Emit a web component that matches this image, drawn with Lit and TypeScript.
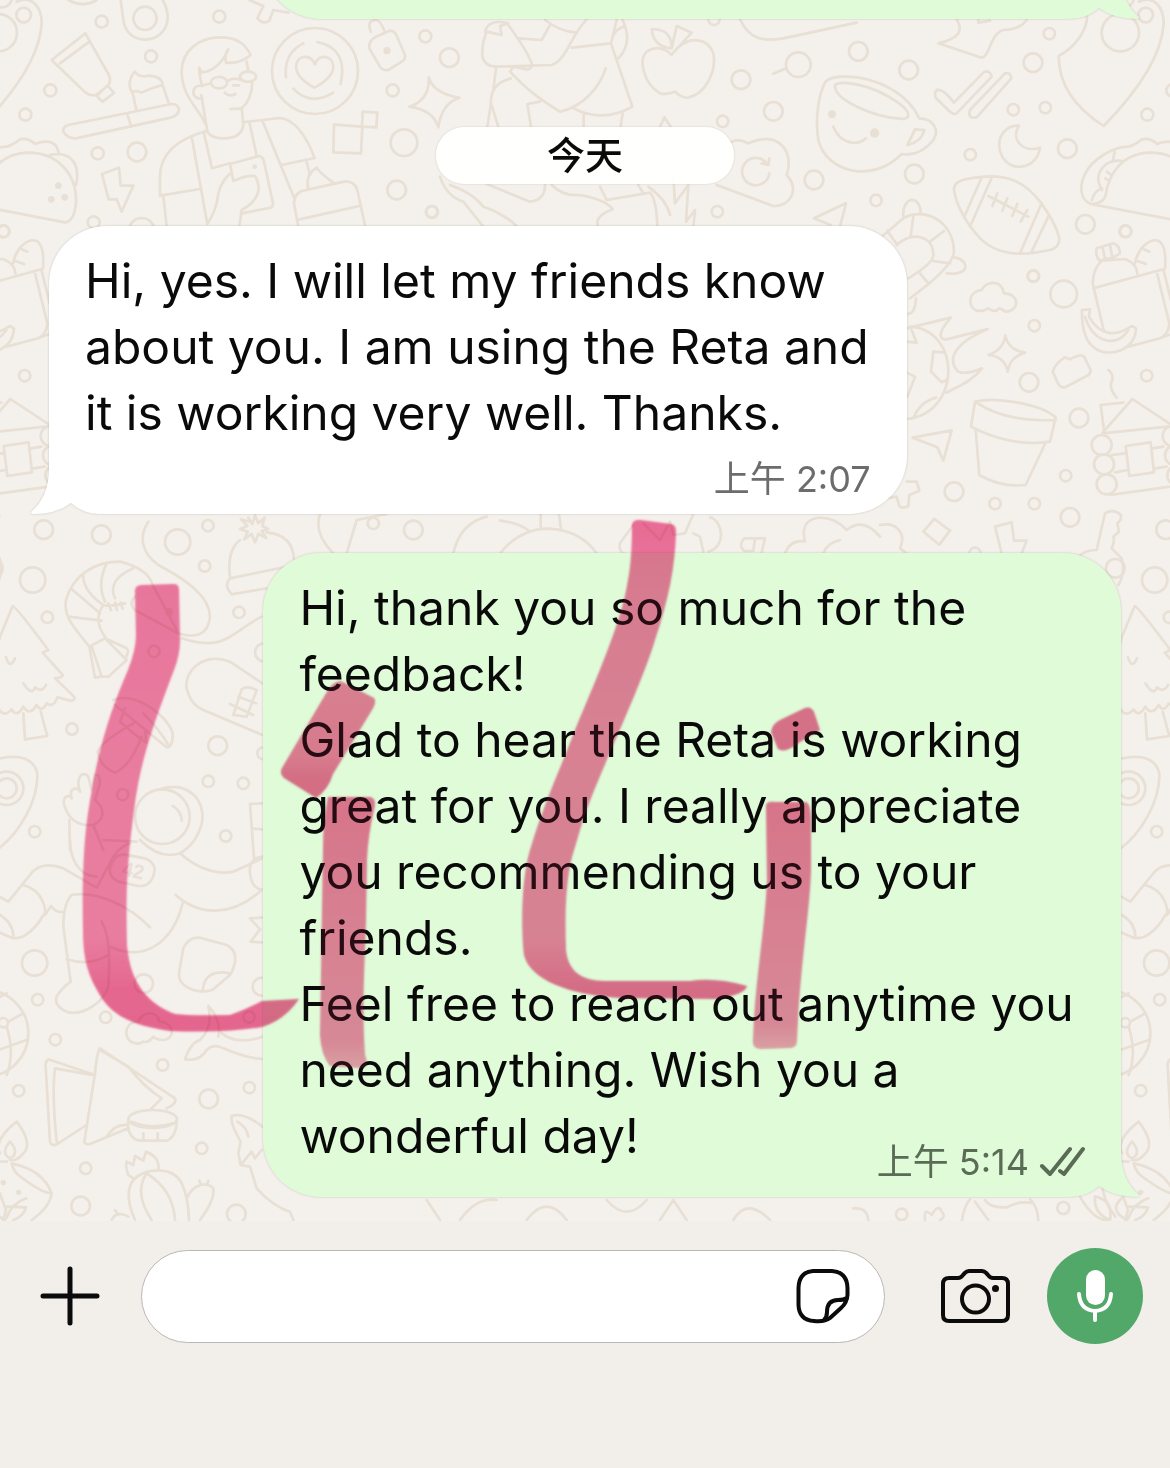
import { LitElement, html, css, svg } from "lit";
import { customElement, property } from "lit/decorators.js";

type Dot = [number, number, number];

interface Patch {
  at: string;
  rings: Dot[];
  dots?: Dot[];
  lines: string;
}

/* Doodles are drawn on a canvas three times larger than the wallpaper. */
const PATCHES: Patch[] = [
  {
    at: "translate(0 0) scale(.33333)",
    rings: [[71, 45, 22], [305, 65, 18], [453, 169, 18], [151, 271, 18], [76, 344, 18], [293, 460, 18], [411, 456, 28], [281, 667, 18], [425, 692, 38], [658, 50, 18], [1276, 109, 18], [1178, 271, 18], [1212, 428, 40], [1190, 570, 28], [1296, 636, 18], [-5, 98, 56], [435, 55, 35], [6, -8, 30], [945, 213, 129], [10, 694, 18]],
    dots: [[175, 557, 10], [154, 598, 10], [194, 592, 10], [1161, 152, 11], [764, 500, 7]],
    lines: `M362,0 L370,60 C375,100 405,119 435,119 C475,119 503,88 503,52 C503,30 495,10 485,-5 M205,0 Q250,25 290,0
    M50,5 C95,-15 125,20 125,70 C120,160 60,260 -55,378 C-130,330 -190,260 -190,168 C-140,140 -100,90 -105,35
    M155,180 L256,100 L325,222 Q335,240 325,256 L290,284 Q270,290 250,272Z M180,190 L268,125 M290,288 L322,256 L342,279 L308,305Z
    M205,375 L515,312 Q535,312 537,328 Q536,345 515,352 L228,415 Q205,417 190,395 Q188,380 205,375Z M382,343 L394,380 M409,330 L398,278 M488,255 L507,312
    M398,278 C385,265 385,235 405,215 Q415,232 440,228 Q485,225 488,255 Q450,265 425,278 Q405,268 398,278
    M615,370 C600,330 545,290 545,215 C545,150 600,112 660,112 C710,112 735,130 752,165 Q720,192 678,188 Q672,165 685,148 C670,185 640,215 605,217 L597,203 Q600,240 607,258 C590,255 580,262 580,280 Q585,298 607,295
    M604,285 L622,395 Q635,415 670,415 Q725,415 730,375 L725,325 L692,327 M725,325 Q755,300 757,245 M740,185 L745,213
    M633,250 a24,17 0 1 0 48,-4 a24,17 0 1 0 -48,4 M720,232 a24,15 0 1 0 48,-4 a24,15 0 1 0 -48,4 M682,244 Q700,230 722,240 M612,256 L633,250 M700,256 H717 M674,278 Q688,292 706,282
    M622,392 Q480,430 480,530 L480,587 L600,567 M575,410 L622,672 Q650,630 655,580 Q665,540 695,517 M612,400 L636,505 L690,490 M490,587 L500,680 M735,366 L840,354 Q900,360 944,474 L845,495 M748,366 L770,468 M788,364 L885,600
    M690,492 L778,468 Q788,470 792,485 L819,610 Q820,622 808,624 L725,640 M690,492 L700,543 Q740,525 765,528 C785,560 780,600 725,630 L718,680 M920,487 L930,525
    M945,193 C930,160 890,165 888,200 Q890,235 943,263 Q998,235 1000,200 C998,165 955,160 945,193Z M910,130 Q850,160 858,232 M952,126 Q1045,145 1022,252 M880,266 Q930,320 1000,278
    M895,680 L882,610 Q880,585 905,573 L1035,544 Q1065,545 1072,570 L1096,680 M898,658 L1078,618 M925,565 Q915,525 950,503 Q960,520 1000,548
    M1112,95 Q1100,62 1125,60 Q1140,58 1152,90 M1125,112 L1168,92 Q1182,92 1188,103 L1215,165 Q1217,178 1205,185 L1165,210 Q1148,212 1140,200 L1108,145 Q1106,122 1125,112Z
    M1002,374 L1087,380 L1083,460 L1000,457Z M1088,335 L1132,338 L1129,382 L1086,380Z M306,522 L357,503 L362,557 L400,557 L365,635 L350,598 L326,598Z
    M-94,612 L195,667 Q222,665 228,610 C232,520 170,458 85,458 C0,460 -40,520 -50,590 Q-60,612 -94,612 C-125,600 -130,560 -110,520 C-90,480 -30,440 20,440 Q40,435 60,418 Q85,412 105,432 Q150,415 170,440 L177,462 C220,465 240,500 228,555 M150,464 L177,462 M-22,455 L-27,480 M0,483 C-50,475 -90,520 -60,570 M-90,600 Q-85,575 -60,565 M-45,515 l10,8 M-50,535 l10,6
    M748,0 L790,18 L772,55 Q790,75 808,62 L820,30 L865,38 M1286,232 Q1290,300 1228,320 Q1300,330 1315,382 Q1325,310 1378,293 Q1300,280 1286,232Z`,
  },
  {
    at: "translate(430 0) scale(.33333)",
    rings: [[58, 173, 28], [933, 239, 28], [1105, 194, 37], [1030, 334, 28], [878, 364, 17], [862, 635, 17], [5, 635, 17], [852, 58, 17]],
    lines: `M1030,221 L1065,206 M725,165 Q690,130 650,155 C625,180 640,250 690,280 Q715,285 735,275 Q755,295 775,293 C830,280 860,210 850,160 C835,115 780,105 738,148 M725,145 Q670,140 665,88 Q725,85 725,145 L740,78 L785,98 L728,160
    M165,95 Q175,55 235,70 L210,78 L215,105 L170,95 Q155,130 157,170 Q165,200 200,200 L365,195 C410,180 420,110 470,58 M235,75 Q290,150 305,190 Q305,210 290,208 L250,200 L240,215 C300,280 350,310 390,335 C460,320 510,260 527,205
    M345,60 Q390,95 440,98 M265,115 L335,120 L360,75 M425,143 L543,130 L560,60 M543,130 L607,320 Q520,370 430,325 M578,60 Q610,130 565,175 M548,110 Q555,90 580,80 M243,235 Q180,250 183,310 L205,380 M198,205 L190,270 M183,310 L172,380 M330,305 L292,312 L303,380 M461,345 V380 M578,340 L572,380
    M30,530 Q50,590 100,605 L160,680 M60,555 Q130,580 160,620 Q220,640 262,680 M170,552 L300,605 Q345,600 345,555 M365,555 Q400,590 450,585 Q530,600 548,628 Q490,650 505,680 M510,560 L530,600 L660,578 Q680,600 682,680 M625,555 L640,580 M655,560 Q710,600 720,645 M690,380 L703,352 L722,380 M730,530 L735,610 L775,555 L768,665 L795,630 L790,680
    M860,555 L1030,618 C1080,620 1110,570 1070,525 C1095,450 1040,390 955,430 Q930,415 905,425 M1018,520 A41,41 0 1 1 1010,490 M1018,475 L1015,495 L995,490 M930,58 C960,120 1000,125 1060,115 L1280,68`,
  },
  {
    at: "translate(790 0) scale(.33333)",
    rings: [[205, 154, 28], [356, 210, 28], [778, 101, 17], [729, 188, 28], [670, 329, 17], [766, 323, 17], [541, 464, 17], [832, 446, 28], [373, 522, 28], [72, 540, 28], [258, 601, 17], [886, 673, 28], [1007, 694, 17], [730, 828, 17]],
    dots: [[126, 343, 12], [254, 399, 14]],
    lines: `M107,245 Q120,230 165,230 C270,230 360,290 387,355 C430,355 450,390 430,420 Q390,470 335,462 C250,550 110,520 85,420 C75,360 85,280 107,245Z M135,255 C150,240 240,250 320,305 C370,340 360,360 330,356 C250,350 130,300 135,255Z M130,380 C150,430 200,440 228,415 M375,388 L403,390 Q395,425 352,435 Q365,410 375,388Z
    M440,270 Q460,265 492,308 L583,215 Q600,210 605,230 L500,340 Q490,345 480,335 L438,295 Q432,280 440,270Z M540,330 L645,220 Q662,215 664,235 L562,350 Q540,360 538,340Z
    M687,377 C650,375 625,405 628,440 C635,520 740,520 750,443 C700,460 660,420 687,377Z M500,58 C520,90 510,115 445,130 L575,173 C600,170 600,100 640,90 Q690,88 710,60 M565,58 V68 L600,62
    M492,570 Q490,545 530,537 C620,520 690,525 750,605 C780,645 800,680 808,715 Q808,745 780,750 C690,770 620,765 570,715 C530,670 500,620 492,570Z M573,537 L522,652 M605,533 L540,680 M755,610 L690,760 M775,650 L725,755 M595,588 L715,650 M622,580 L607,618 M652,595 L637,632 M682,612 L667,648 M712,630 L692,665
    M72,655 L168,610 L150,680 M72,655 L122,675 M340,650 C335,590 390,580 392,640 M275,710 L340,655 C400,620 490,660 492,755 Q490,800 360,895 M320,735 C370,690 430,710 430,765 Q430,790 355,835 M370,650 L362,708 M462,693 L420,725 M430,783 L480,790 M390,820 L415,850 M292,692 L322,735 M495,773 C540,780 540,830 470,820`,
  },
  {
    at: "translate(880 220) scale(.33333)",
    rings: [[460, 169, 17], [551, 222, 40], [463, 317, 17], [447, 487, 28], [597, 594, 28], [800, 467, 17], [557, 767, 17], [222, 815, 28], [345, 851, 17], [463, 851, 17], [570, 892, 28], [285, 1000, 17], [665, 675, 30], [672, 733, 30], [680, 793, 30], [878, 648, 30], [885, 706, 30], [892, 766, 30]],
    lines: `M290,272 C265,265 260,215 305,210 C320,180 365,180 372,220 C420,220 420,275 375,275 Q365,265 357,265 Q345,280 325,265 Q310,275 290,272Z
    M80,325 L212,293 C180,330 170,360 200,358 L323,327 C200,380 210,430 235,455 Q260,465 306,445 C270,490 230,500 200,518 M90,320 C245,330 245,580 80,597 M190,397 L160,395 L153,455 L185,487 L200,480 M80,458 L105,470 L82,530 M100,595 Q120,545 168,533 M95,330 L110,368 L80,365 M108,235 Q105,285 80,282
    M376,347 Q385,390 435,398 Q390,410 383,455 Q375,410 325,405 Q370,390 376,347Z M518,455 Q525,430 555,412 L570,418 Q600,400 612,410 L632,450 Q630,465 620,468 L555,502 Q540,503 535,492Z
    M672,335 L638,190 Q640,145 665,122 L735,117 Q770,130 772,160 M640,205 L850,148 M830,155 L868,310 Q865,345 840,355 L745,380 M850,148 L885,290 M840,355 L880,340
    M650,85 L700,70 Q718,75 720,100 L700,112 L660,122 Q645,110 650,85Z M668,83 L675,118 M690,75 L697,112 M765,130 C775,80 810,55 835,62 Q860,75 855,145 M785,85 L808,95 M770,122 L798,132
    M606,270 L630,268 L627,290 C660,350 710,350 755,318 L768,325 C765,390 690,415 645,385 C615,365 605,320 606,270Z M615,290 C640,370 710,385 745,330 M685,450 Q705,465 693,490 Q690,510 710,533
    M662,555 L730,548 M662,555 L672,630 M668,638 L757,537 L880,618 L668,640 M695,705 L735,700 M705,757 L742,750 M690,825 L900,796 M820,685 L850,680 M828,745 L860,740 M737,678 L812,667 L822,757 L748,768Z
    M285,545 C340,530 480,550 527,592 L510,665 C420,680 330,650 273,620Z M285,545 C350,590 430,605 527,600 M287,630 L298,765 C340,790 390,800 437,795 L495,672 M98,653 L215,631 L190,722 L172,682Z
    M80,785 L110,785 L118,812 L88,825 L85,858 Q65,868 58,858 L50,830 L20,835 M130,935 L163,897 L210,932 L178,974Z M365,1000 L345,920 L395,907 L402,962 L440,962 L425,1000
    M600,1005 Q620,990 650,990 L675,880 Q700,865 723,885 Q725,900 712,910 L717,935 L700,950 Q705,965 695,985 L725,1015 C735,1050 725,1080 715,1095 M0,915 C50,905 80,940 60,985 L80,1000`,
  },
  {
    at: "translate(0 450) scale(.33333)",
    rings: [[131, 239, 28], [304, 254, 28], [98, 390, 38], [533, 276, 38], [624, 227, 17], [614, 348, 17], [142, 502, 17], [717, 487, 17], [462, 604, 17], [216, 837, 17], [653, 887, 28], [625, 994, 17], [730, 1000, 17], [368, 1034, 17], [677, 1158, 17], [104, 1145, 17], [792, 607, 27], [790, 910, 18], [20, 1015, 50], [20, 1015, 30], [487, 1100, 82], [-20, 355, 28]],
    dots: [[507, 485, 12]],
    lines: `M38,468 Q48,470 145,600 L128,608 L188,675 Q190,682 165,685 L222,740 Q228,752 210,752 L172,742 Q160,775 140,760 Q125,790 110,765 Q90,800 70,770 Q50,805 35,778 Q10,805 -5,775 L-20,790 Q-40,780 -50,740 L0,560Z M70,790 L75,868 L142,858 L122,785 M18,622 Q30,660 45,625 M70,700 Q95,740 105,712 Q125,730 138,705
    M-10,1200 C60,1150 115,1050 112,970 C100,920 50,915 0,925 M268,590 C220,530 190,500 198,450 C220,370 290,335 360,335 C420,350 450,375 458,405 M315,560 C280,510 300,480 310,465 Q330,470 375,460 M212,415 L300,490 M250,370 Q245,420 310,465 M320,340 Q290,400 315,455 M400,355 Q320,390 345,445 M205,500 L305,512 M325,460 l8,20 M345,458 l6,22 M362,458 l6,18
    M315,565 L268,590 L285,683 L300,680 M275,590 L305,680 L325,680 L380,630 L315,565 L380,595 Q390,605 375,625
    M445,215 C415,260 425,310 475,345 C560,390 630,440 630,500 C625,560 580,565 530,548 L405,480 Q385,460 405,440 M545,565 C680,610 700,540 785,500 M458,405 L535,550
    M690,380 Q680,300 720,270 M800,247 Q880,255 882,330 M690,385 L885,345 M690,385 Q670,405 695,433 L800,415 M745,203 L757,222 L765,196 L775,220 L794,203 L787,228 L805,237 L785,243 L799,264 L775,252 L765,277 L755,252 L733,268 L743,245 L720,237 L742,228 L723,208 L750,215
    M787,700 L690,635 C600,600 540,680 565,730 Q575,765 610,780 L787,855 M700,795 L725,718 Q740,705 770,720 L740,800Z M690,762 L760,795 M715,740 L768,760
    M340,750 C400,725 500,790 518,850 Q520,890 500,892 L345,765 M430,790 Q480,840 505,885 M375,775 L360,815 L400,850 L440,878 L435,845 M400,820 Q310,870 293,905 Q300,950 345,968 Q390,950 425,860
    M198,1080 C180,1040 205,1030 215,1045 C205,1010 235,1010 240,1025 C225,980 250,960 265,980 L275,1020 L285,975 Q300,970 300,1000 L285,1050 C320,1080 310,1110 280,1125 Q220,1130 198,1080Z M208,1110 L210,1200 M280,1125 L310,1200
    M480,1018 C560,990 620,1050 605,1120 Q590,1180 540,1210 M518,1068 Q545,1085 545,1112 M310,1170 L410,1175 M787,1060 L750,1062 L762,1225 M755,1135 L787,1138`,
  },
  {
    at: "translate(0 840) scale(.33333)",
    rings: [[104, 369, 38], [113, 479, 17], [317, 532, 17], [431, 431, 28], [166, 599, 17], [488, 675, 17], [56, 752, 17], [626, 777, 28], [748, 743, 17], [605, 925, 17], [257, 985, 17], [242, 1098, 28], [709, 1122, 28], [747, 531, 17], [785, 440, 27], [-45, 580, 130], [10, 548, 14]],
    dots: [[10, 1028, 8], [56, 1057, 8]],
    lines: `M-20,160 L25,185 L90,105 Q120,60 190,85 L290,143 L340,50 Q360,20 390,10 M70,135 C130,150 145,220 130,225 C100,280 60,300 35,293 L-20,270 M0,225 Q40,250 40,290 M135,225 L153,198 Q170,220 188,215 M210,0 C210,60 240,110 290,110
    M212,425 L190,260 Q190,190 215,165 C290,150 390,200 450,262 M305,245 C330,290 330,350 325,440 C310,490 250,525 205,517 Q160,500 170,470 Q180,450 212,425 M200,358 Q270,380 325,345 M330,320 C440,370 520,300 548,190 M527,165 C600,230 700,230 787,148 M420,0 Q480,60 540,40 Q620,110 700,95 L787,55 M787,50 Q745,55 750,100 Q755,145 787,150
    M370,43 L435,55 Q468,70 463,95 Q455,140 415,138 L355,125 Q325,110 330,85 Q340,45 370,43Z
    M600,293 L680,315 Q710,330 705,365 Q700,390 690,405 L640,448 Q615,460 580,450 Q535,435 537,400 L550,325 Q565,290 600,293Z M608,450 Q615,385 690,400 M787,233 L750,235 L780,268 L752,305 L787,307
    M25,545 L70,520 M20,560 Q45,640 20,705 M-20,635 L80,600 M-20,480 L20,460 M400,608 C370,600 370,545 415,545 C430,510 475,515 478,545 C520,545 530,595 490,600 Q470,600 460,590 Q445,610 430,605 Q415,615 400,608
    M625,498 Q665,540 655,590 M625,498 Q640,560 600,600 Q570,610 555,658 Q600,665 620,630 Q640,610 670,625 Q740,655 787,657 M655,570 Q700,620 787,590
    M300,625 L525,775 Q532,790 500,805 M300,625 Q290,640 285,700 L253,905 Q255,915 270,912 L385,865 M300,630 L385,680 Q430,740 485,775 L450,810 M285,705 L145,658 Q135,665 137,680 L150,905 Q155,920 170,913 L255,858 M275,705 L165,685 Q155,760 170,905 M320,890 Q345,850 385,855
    M385,837 a73,27 0 1 0 146,0 a73,27 0 1 0 -146,0 M385,840 Q380,895 420,902 L500,902 Q530,890 530,840 M395,845 Q455,870 520,850 M430,880 V900 M473,880 V900
    M30,960 Q50,965 70,940 Q100,910 50,845 Q-20,900 0,940 M30,905 Q60,940 30,955 Q0,940 30,905 M35,970 Q40,1000 75,1020 Q130,1060 155,1060 Q130,990 35,970 M155,1060 Q150,1100 95,1140 M20,965 Q-50,960 -60,1020 Q-60,1080 -20,1130 M0,1060 L18,1110 L10,1140 M20,1100 L78,1102 Q70,1130 40,1140
    M405,1140 Q370,1060 400,1020 C440,980 520,980 545,1030 Q565,1070 567,1140 M440,1000 Q400,1060 455,1140 M440,1000 Q520,1050 525,1140 M400,1015 L385,1005 Q375,980 380,965 L400,975 L405,948 L430,962 L438,935 Q480,950 475,990 M560,1075 C580,1030 620,1025 640,1045 Q645,1080 600,1140 M598,1022 L602,1032 M625,1022 L622,1032 M335,1140 Q350,1110 385,1130 M345,1110 L355,1125
    M787,860 Q730,815 695,828 Q690,850 722,905 L715,940 L722,975 L750,980 L770,1045 Q820,1100 870,1115 L880,1140 M722,975 L755,935 L765,955 L785,930 M712,845 Q740,860 745,890`,
  },
  {
    at: "translate(860 1120) scale(.33333)",
    rings: [[125, 283, 17], [610, 264, 18]],
    lines: `M305,310 Q310,260 330,238 M535,310 Q535,260 510,238 M375,240 Q390,265 440,262 Q480,240 520,250 M345,245 L385,300 M195,300 Q190,260 215,285 Q235,250 245,275 Q260,290 240,300 M705,230 Q700,280 750,300 Q760,240 705,230Z M865,235 Q820,250 805,295 M785,235 Q745,270 800,300 M660,230 Q700,300 740,300 M-20,265 Q20,260 25,300
    M-380,300 Q-340,230 -270,300 M-600,300 L-560,240 L-520,300 M-760,240 Q-700,310 -640,240 M-1000,300 Q-940,220 -880,300 M-1200,300 Q-1150,230 -1090,240 M-1300,240 L-1260,300`,
  },
  {
    at: "translate(500 500) scale(.33333)",
    rings: [[-260, 90, 28], [-380, 70, 17]],
    lines: `M0,62 Q60,68 90,95 M0,160 Q60,86 145,86 Q240,90 290,160 M122,42 V82 M177,42 L183,85 M400,75 L360,130 Q355,150 370,160 L440,180 M430,70 L480,120 L510,65 L520,105 L555,100 L580,42 M630,52 C670,64 680,140 625,155 M580,100 L600,110 L610,155 M733,115 h62 l-10,42 M765,115 l-5,38 M733,115 q-20,20 0,38 h25 M855,160 Q870,118 915,124 Q900,64 950,54 Q1000,48 1040,90 Q1090,50 1140,110 M970,160 Q980,130 1020,120
    M-540,42 Q-560,100 -500,160 M-140,160 Q-120,70 -40,50 M-460,160 L-430,60 L-340,42`,
  },
];

interface Mark {
  fill: string;
  d: string;
}

const MARKS: Mark[] = [
  { fill: "url(#hook)", d: "M135,591 Q135,585 142,585 L174,584 Q179,584 179,590 L180,640 Q180,655 174,670 C155,720 140,760 134,810 C126,870 126,900 127,945 C130,985 150,1005 175,1014 Q190,1016 230,1015 Q245,1010 262,1001 L299,999 Q285,1020 262,1027 Q225,1033 170,1031 C130,1025 110,1015 97,990 C85,970 83,950 83,930 C82,870 84,830 92,790 C100,740 115,700 128,670 Q136,650 136,635Z" },
  { fill: "url(#hook)", d: "M632,526 Q632,519 640,520 L671,524 Q676,525 676,531 C675,570 668,600 655,640 C640,690 600,770 583,820 L572,857 C565,885 565,920 566,950 C568,970 580,981 605,981 L690,981 Q715,977 747,986 Q745,995 715,999 L620,998 C570,995 530,980 524,955 C521,930 521,880 530,850 C545,800 560,770 575,730 C600,670 622,620 628,580 Q632,560 632,526Z" },
  { fill: "url(#bar)", d: "M766,806 Q766,801 775,802 L806,802 Q812,804 811,830 L811,860 C812,900 800,960 797,1040 Q797,1048 790,1048 L760,1049 Q752,1048 753,1040 C755,980 765,930 767,880Z" },
  { fill: "#f37fab", d: "M771,732 Q772,724 780,720 L805,708 Q811,706 814,712 L820,730 L800,742 Q785,754 778,749Z" },
  { fill: "url(#slash)", d: "M340,681 Q345,683 374,698 Q377,702 372,710 L333,774 Q328,790 316,798 L284,778 Q279,774 282,768 L328,690 Q333,682 340,681Z" },
  { fill: "url(#bar)", d: "M328,797 L370,797 Q377,798 374,810 Q368,835 367,860 L366,920 C364,980 362,1010 365,1055 Q370,1068 360,1068 L330,1066 Q321,1055 320,1035 L323,850 Q323,820 328,797Z" },
];

const tickIcon = html`<svg class="ticks" viewBox="0 0 46 32" role="img" aria-label="已读">
  <path d="M3 20 11 28 31 3M21 25 25 28 44 3" />
</svg>`;

@customElement("chat-wallpaper")
class ChatWallpaper extends LitElement {
  static styles = css`
    :host { display: block; }
    svg { display: block; width: 100%; height: 100%; }
    .ink { fill: none; stroke: #e8dfd5; stroke-width: 8; stroke-linecap: round; stroke-linejoin: round; }
    .dot { fill: #e8dfd5; stroke: none; }
    .badge { fill: #e8dfd5; stroke: none; font: bold 60px "Liberation Sans", sans-serif; }
  `;

  render() {
    return html`<svg aria-hidden="true">
      <defs>
        <g id="doodles" class="ink">
          ${PATCHES.map(
            (p) => svg`<g transform=${p.at}>
              ${p.rings.map(([x, y, r]) => svg`<circle cx=${x} cy=${y} r=${r}></circle>`)}
              ${(p.dots ?? []).map(([x, y, r]) => svg`<circle class="dot" cx=${x} cy=${y} r=${r}></circle>`)}
              <path d=${p.lines}></path>
            </g>`
          )}
          <text class="badge" transform="translate(121 875) rotate(12) scale(.33333)">42</text>
        </g>
      </defs>
      <use href="#doodles"></use>
      <use href="#doodles" x="1122"></use>
      <use href="#doodles" x="-1122"></use>
    </svg>`;
  }
}

@customElement("chat-bubble")
class ChatBubble extends LitElement {
  @property({ type: Boolean, reflect: true }) outgoing = false;
  @property() time = "";

  static styles = css`
    :host {
      --fill: #ffffff;
      --meta: #6c6c6c;
      position: relative;
      display: block;
      box-sizing: border-box;
      width: 858px;
      max-width: 80%;
      padding: 22px 36px 12px;
      border-radius: 58px;
      background: var(--fill);
      color: #0a0a0a;
      filter: drop-shadow(0 0 1px rgba(60, 50, 40, 0.22));
      align-self: flex-start;
    }
    :host([outgoing]) { --fill: #dffbd7; --meta: #5a6b56; align-self: flex-end; }
    .tail { position: absolute; z-index: -1; left: -18px; bottom: 0; width: 70px; height: 60px; fill: var(--fill); }
    :host([outgoing]) .tail { left: auto; right: -18px; transform: scaleX(-1); }
    .body { font-size: 48px; line-height: 66px; }
    .meta {
      display: flex;
      align-items: center;
      gap: 10px;
      width: fit-content;
      margin: 10px 0 0 auto;
      font-size: 36px;
      line-height: 46px;
      color: var(--meta);
    }
    :host([outgoing]) .meta { margin-top: -30px; }
    .ticks { width: 46px; height: 32px; fill: none; stroke: var(--meta); stroke-width: 4; stroke-linecap: round; stroke-linejoin: round; }
    ::slotted(p) { margin: 0; }
  `;

  render() {
    return html`
      <svg class="tail" viewBox="0 0 70 60" aria-hidden="true">
        <path d="M18,0 V14 Q18,43 0,58 Q0,60 3,60 Q25,60 40,49 Q52,60 70,60 V0Z"></path>
      </svg>
      <div class="body"><slot></slot></div>
      ${this.time
        ? html`<div class="meta"><time>${this.time}</time>${this.outgoing ? tickIcon : ""}</div>`
        : ""}
    `;
  }
}

@customElement("app-root")
class AppRoot extends LitElement {
  static styles = css`
    :host {
      display: flex;
      flex-direction: column;
      min-height: 100vh;
      background: #f2efea;
      font-family: Inter, "Noto Sans CJK SC", sans-serif;
    }
    .chat {
      position: relative;
      display: flex;
      flex-direction: column;
      overflow: hidden;
      padding: 0 49px 24px;
      background: #f4f0eb;
    }
    chat-wallpaper { position: absolute; inset: 0; }
    .earlier { height: 140px; margin-top: -121px; }
    .day {
      position: relative;
      align-self: center;
      box-sizing: border-box;
      min-width: 298px;
      margin: 108px 0 42px;
      border-radius: 28px;
      background: rgba(255, 255, 255, 0.94);
      box-shadow: 0 0 2px rgba(60, 50, 40, 0.2);
      color: #0a0a0a;
      font-size: 38px;
      font-weight: 500;
      line-height: 57px;
      text-align: center;
    }
    .reply { margin-top: 39px; }
    .marker { position: absolute; left: 0; top: 0; width: 1170px; height: 1221px; pointer-events: none; }
    .wash { fill: #e0507f; opacity: 0.14; }
    .multiply { mix-blend-mode: multiply; }
    .composer { display: flex; align-items: center; padding: 27px 27px 124px 40px; }
    button { display: grid; place-items: center; flex: none; margin: 0; padding: 0; border: 0; background: none; }
    button svg { display: block; fill: none; stroke: #0b0b0b; stroke-width: 5; stroke-linecap: round; stroke-linejoin: round; }
    .add, .add svg { width: 60px; height: 60px; }
    .field {
      display: flex;
      align-items: center;
      flex: 1;
      min-width: 0;
      box-sizing: border-box;
      height: 93px;
      margin: 0 56px 0 41px;
      padding: 0 34px 0 36px;
      border: 1px solid #b9b8b6;
      border-radius: 47px;
      background: #ffffff;
    }
    input { flex: 1; min-width: 0; border: 0; outline: 0; background: none; font: 48px Inter, "Noto Sans CJK SC", sans-serif; }
    .sticker svg { width: 54px; height: 56px; stroke-width: 4; }
    .camera { margin-right: 37px; }
    .camera svg { width: 69px; height: 54px; stroke-width: 4; }
    .mic { width: 96px; height: 96px; border-radius: 50%; background: #52a869; }
    .mic svg { width: 36px; height: 54px; stroke: #ffffff; stroke-width: 4; }
    .solid { fill: #0b0b0b; stroke: none; }
    .white { fill: #ffffff; stroke: none; }
  `;

  render() {
    return html`
      <main class="chat">
        <chat-wallpaper></chat-wallpaper>
        <chat-bubble class="earlier" outgoing></chat-bubble>
        <div class="day">今天</div>
        <chat-bubble time="上午 2:07">
          <p>Hi, yes. I will let my friends know about you. I am using the Reta and it is working very well. Thanks.</p>
        </chat-bubble>
        <chat-bubble class="reply" outgoing time="上午 5:14">
          <p>Hi, thank you so much for the feedback!</p>
          <p>Glad to hear the Reta is working great for you. I really appreciate you recommending us to your friends.</p>
          <p>Feel free to reach out anytime you need anything. Wish you a wonderful day!</p>
        </chat-bubble>
        <svg class="marker wash" viewBox="0 0 1170 1221" aria-hidden="true">
          ${MARKS.map((m) => svg`<path d=${m.d}></path>`)}
        </svg>
        <svg class="marker multiply" viewBox="0 0 1170 1221" aria-hidden="true">
          <defs>
            <linearGradient id="hook" gradientUnits="userSpaceOnUse" x1="0" y1="520" x2="0" y2="1030">
              <stop offset="0" stop-color="#f67fad"></stop>
              <stop offset=".15" stop-color="#f68cb6"></stop>
              <stop offset=".5" stop-color="#f693ba"></stop>
              <stop offset=".82" stop-color="#f693ba"></stop>
              <stop offset=".92" stop-color="#f37aa8"></stop>
              <stop offset="1" stop-color="#f278a6"></stop>
            </linearGradient>
            <linearGradient id="bar" x1="0" y1="0" x2="0" y2="1">
              <stop offset="0" stop-color="#f683ad"></stop>
              <stop offset=".4" stop-color="#f68fb7"></stop>
              <stop offset=".9" stop-color="#f59abd"></stop>
              <stop offset="1" stop-color="#f8b4cd"></stop>
            </linearGradient>
            <linearGradient id="slash" x1="0" y1="0" x2="0" y2="1">
              <stop offset="0" stop-color="#f68fb5"></stop>
              <stop offset=".65" stop-color="#f68bb2"></stop>
              <stop offset=".85" stop-color="#f27ba6"></stop>
            </linearGradient>
            <filter id="soft"><feGaussianBlur stdDeviation="1.2"></feGaussianBlur></filter>
          </defs>
          <g filter="url(#soft)">${MARKS.map((m) => svg`<path fill=${m.fill} d=${m.d}></path>`)}</g>
        </svg>
      </main>
      <footer class="composer">
        <button class="add" type="button" aria-label="添加">
          <svg viewBox="0 0 60 60"><path d="M30 3V57M3 30H57"></path></svg>
        </button>
        <div class="field">
          <input type="text" aria-label="消息" />
          <button class="sticker" type="button" aria-label="贴图">
            <svg viewBox="0 0 54 56"><path d="M17 3H36Q51 4 51.500 20V27Q51 35 45 40L34 50Q29 54 18 53Q3 52 2.500 37V20Q3 4 17 3ZM28 52Q31 49 31 44Q31 32 42 32Q48 32 51 30"></path></svg>
          </button>
        </div>
        <button class="camera" type="button" aria-label="相机">
          <svg viewBox="0 0 69 54"><path d="M8 9H17Q20 9 22 6 25 2 28 2H41Q44 2 47 6 49 9 52 9H61Q67 9 67 15V46Q67 52 61 52H8Q2 52 2 46V15Q2 9 8 9Z"></path><circle cx="34.500" cy="30" r="13.500"></circle><circle class="solid" cx="54.500" cy="19.500" r="3.500"></circle></svg>
        </button>
        <button class="mic" type="button" aria-label="语音">
          <svg viewBox="0 0 36 54"><rect class="white" x="9" y="1" width="19" height="35" rx="9.500"></rect><path d="M2 25Q3 41 18 42 33 41 34 25M18 42V51"></path></svg>
        </button>
      </footer>
    `;
  }
}
